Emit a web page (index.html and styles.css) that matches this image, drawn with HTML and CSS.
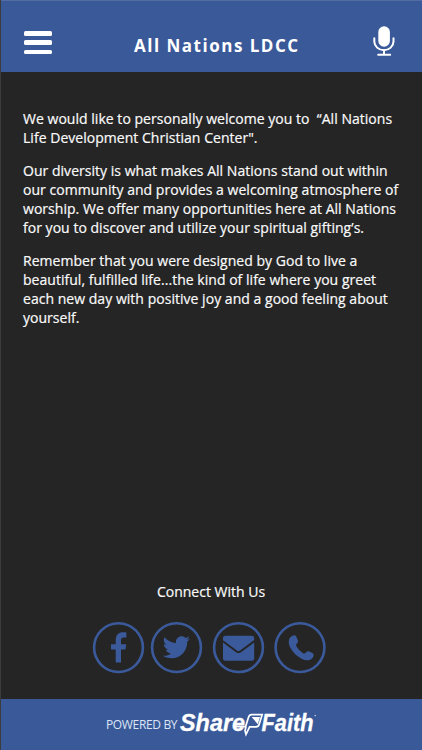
FILE: index.html
```html
<!DOCTYPE html>
<html lang="en">
<head>
<meta charset="utf-8">
<title>All Nations LDCC</title>
<link rel="stylesheet" href="styles.css">
</head>
<body>
<div class="app">
  <header class="header">
    <div class="menu"><span></span><span></span><span></span></div>
    <h1 class="title">All Nations LDCC</h1>
    <svg class="mic" viewBox="0 0 22 31">
      <rect x="5.3" y="0.2" width="11.6" height="20.6" rx="5.8" fill="#fff"/>
      <path d="M1.3 12.2v3.2a9.5 8.7 0 0 0 19.2 0v-3.2M11 24v4.8M5.2 28.8h12" fill="none" stroke="#fff" stroke-width="2" stroke-linecap="round"/>
    </svg>
  </header>
  <main class="content">
    <p>We would like to personally welcome you to&nbsp; “All Nations<br>Life Development Christian Center".</p>
    <p>Our diversity is what makes All Nations stand out within<br>our community and provides a welcoming atmosphere of<br>worship. We offer many opportunities here at All Nations<br>for you to discover and utilize your spiritual gifting’s.</p>
    <p>Remember that you were designed by God to live a<br>beautiful, fulfilled life...the kind of life where you greet<br>each new day with positive joy and a good feeling about<br>yourself.</p>
  </main>
  <section class="connect">
    <h2 class="connect-title">Connect With Us</h2>
    <div class="links">
      <svg class="link" viewBox="-.5 -.6 52 52">
        <circle class="ring" cx="26" cy="26" r="24.4"/>
        <path d="M23.2 40.8V27.8h-4.7v-5.2h4.7v-4.1c0-5.2 2.9-7.8 7.3-7.8 1.7 0 2.9.1 3.4.2v4.9h-2.6c-2.3 0-2.8 1.2-2.8 2.8v4h5.2l-.7 5.2h-4.5v13z"/>
      </svg>
      <svg class="link link-twitter" viewBox="-.5 -.6 52 52">
        <circle class="ring" cx="26" cy="26" r="24.4"/>
        <path transform="translate(12.2 12) scale(1.135)" d="M23.954 4.569c-.885.389-1.83.654-2.825.775 1.014-.611 1.794-1.574 2.163-2.723-.951.555-2.005.959-3.127 1.184-.896-.959-2.173-1.559-3.591-1.559-2.717 0-4.92 2.203-4.92 4.917 0 .39.045.765.127 1.124C7.691 8.094 4.066 6.13 1.64 3.161c-.427.722-.666 1.561-.666 2.475 0 1.71.87 3.213 2.188 4.096-.807-.026-1.566-.248-2.228-.616v.061c0 2.385 1.693 4.374 3.946 4.827-.413.111-.849.171-1.296.171-.314 0-.615-.03-.916-.086.631 1.953 2.445 3.377 4.604 3.417-1.68 1.319-3.809 2.105-6.102 2.105-.39 0-.779-.023-1.17-.067 2.189 1.394 4.768 2.209 7.557 2.209 9.054 0 13.999-7.496 13.999-13.986 0-.209 0-.42-.015-.63.961-.689 1.8-1.56 2.46-2.548z"/>
      </svg>
      <svg class="link link-mail" viewBox="-.5 -.6 52 52">
        <circle class="ring" cx="26" cy="26" r="24.4"/>
        <path d="M12.7 14.2h26.6q2.4 0 2.4 2.3v2L27.6 29q-1.6 1.2-3.2 0L10.5 18.7v-2.2q0-2.3 2.2-2.3z"/>
        <path d="M10.5 20.8l13 9.8q2.5 1.8 5 0l13.2-9.8v16q0 2.3-2.4 2.3H12.7q-2.2 0-2.2-2.3z"/>
      </svg>
      <svg class="link link-phone" viewBox="0 -.6 52 52">
        <circle class="ring" cx="26" cy="26" r="24.4"/>
        <path d="M18.5 14.1q2.6-1.1 3.7.8l1.6 3.5q.8 1.8-.7 3.2-1.6 1.4-.8 3 2.6 4.6 7.1 7.2 1.4.7 2.6-.9 1.2-1.7 3.1-1l3.5 1.5q1.5.8.9 3-.8 3.2-4.3 4-3.7.8-7.6-1.3-7.9-4.1-11.8-12-1.7-3.6-.8-7.2.8-2.9 3.5-3.8z"/>
      </svg>
    </div>
  </section>
  <footer class="footer">
    <span class="powered">POWERED BY</span>
    <svg class="logo" viewBox="0 0 138 26">
      <g class="logo-text">
        <text x="0" y="19" textLength="65" lengthAdjust="spacingAndGlyphs">Share</text>
        <text x="81.5" y="19" textLength="52" lengthAdjust="spacingAndGlyphs">Faith</text>
      </g>
      <path d="M54 14.6h11.6L68.6 5q.8-2.4 3-2.4h10.6l-3 9.6q-.8 2.6-3.2 2.6h-6.4L66 22.4l-1-3.6 1-4.2" fill="none" stroke="#fff" stroke-width="1.7"/>
      <path d="M71.6 5h8.4l-2.2 7.2z" fill="#fff"/>
      <circle cx="135.2" cy="3.6" r=".8" fill="#b9c8e5"/>
    </svg>
  </footer>
</div>
</body>
</html>
```
FILE: styles.css
```css
* { box-sizing: border-box; }
body {
  margin: 0;
  background: #252525;
  color: #fafafa;
  font-family: "Open Sans", "Noto Sans", sans-serif;
}
.app {
  width: 422px;
  height: 750px;
  display: flex;
  flex-direction: column;
  overflow: hidden;
  border-left: 1px solid #3b3c3e;
}
.header {
  height: 72px;
  flex: none;
  display: flex;
  align-items: flex-start;
  background: #3a5999;
  border-top: 1px solid #536da3;
  margin-left: -1px;
  border-left: 1px solid #4b689f;
}
.menu {
  width: 28px;
  margin: 30px 0 0 23px;
  display: flex;
  flex-direction: column;
  gap: 4.5px;
}
.menu span {
  height: 4.8px;
  border-radius: 1.5px;
  background: #fff;
}
.title {
  width: 170px;
  margin: 33px 0 0 82px;
  font-size: 17px;
  line-height: 24px;
  font-weight: 700;
  letter-spacing: 1.5px;
  white-space: nowrap;
  color: #fff;
}
.mic {
  width: 22px;
  height: 31px;
  margin: 25px 0 0 69px;
}
.content {
  flex: 1;
  padding: 38px 0 0 22px;
  font-size: 14px;
  line-height: 18.95px;
  letter-spacing: .03px;
  white-space: nowrap;
  -webkit-text-stroke: .2px;
}
.content p { margin: 0 0 14px; padding-top: .1px; }
.connect {
  height: 117px;
  flex: none;
}
.connect-title {
  margin: 0;
  padding-right: 1px;
  text-align: center;
  font-size: 14px;
  line-height: 20px;
  font-weight: 400;
  -webkit-text-stroke: .2px;
}
.links {
  display: flex;
  margin: 19px 0 0 91px;
}
.link {
  width: 52px;
  height: 52px;
  overflow: visible;
  fill: #3b5a9b;
}
.link-twitter { margin-left: 6px; }
.link-mail { margin-left: 10px; }
.link-phone { margin-left: 10px; }
.ring {
  fill: none;
  stroke: #3b5a9b;
  stroke-width: 2.6;
}
.footer {
  height: 51px;
  flex: none;
  display: flex;
  background: #3a5999;
  margin-left: -1px;
  padding-left: 106px;
}
.powered {
  width: 74px;
  margin-top: 16px;
  font-size: 12px;
  letter-spacing: -.35px;
  line-height: 20px;
  white-space: nowrap;
  color: #dce5f6;
}
.logo {
  width: 138px;
  height: 26px;
  margin-top: 13px;
  overflow: visible;
}
.logo-text {
  font: italic 700 23.5px "Liberation Sans", sans-serif;
  fill: #fff;
  stroke: #fff;
  stroke-width: .3px;
}
```
